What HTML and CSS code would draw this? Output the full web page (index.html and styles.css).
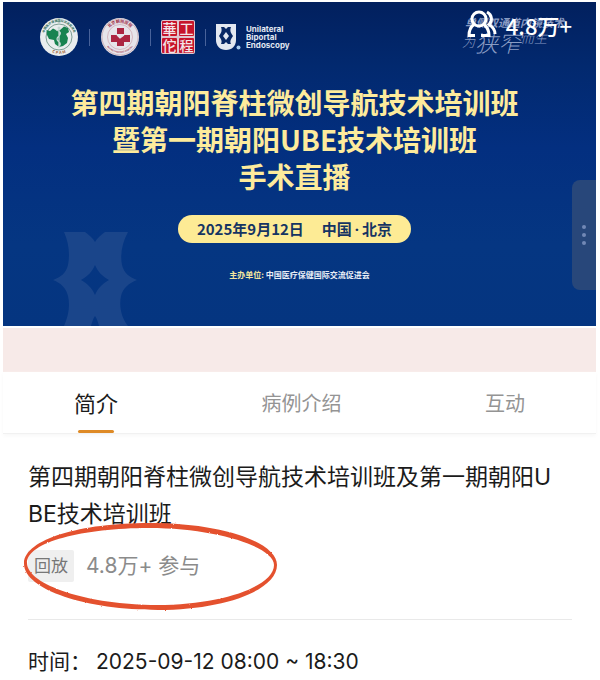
FILE: index.html
```html
<!DOCTYPE html>
<html lang="zh-CN">
<head>
  <meta charset="UTF-8">
  <meta name="viewport" content="width=device-width, initial-scale=1.0">
  <title>手术直播</title>
  <link rel="stylesheet" href="styles.css">
</head>
<body>

  <main class="page">
    <section class="banner">
      <!-- Background ornament -->
      <svg class="ornament" viewBox="0 0 84 94" aria-hidden="true">
        <path fill-rule="evenodd" d="M11 0H32C36 3 40 6 42 10C44 6 48 3 52 0H75C69 11 67 23 69 33C71 41 76 45 84 48C76 51 70 56 68 64C66 74 68 85 75 94H46C45 90 44 87 42 84C40 87 39 90 38 94H11C16 83 17 73 15 64C13 56 8 51 0 48C8 45 13 41 15 33C17 23 16 11 11 0ZM42 33C39 40 35 44 28 48C35 52 39 56 42 63C45 56 49 52 56 48C49 44 45 40 42 33Z"/>
      </svg>

      <div class="logos">
        <svg class="logo-round" viewBox="0 0 40 40" role="img" aria-label="中国医疗保健国际交流促进会">
          <circle cx="20" cy="20" r="19" fill="#e9edee"/>
          <circle cx="20" cy="20" r="13" fill="none" stroke="#4d7d6d" stroke-width="0.7"/>
          <path d="M7.500 13L11 14L14 11.500L17 13L21 13L25 9.500L29 11L30 15L27 17L29 21L28 26L24 29L20 30L16 27L15 23L10 22L8 18Z" fill="#178350"/>
          <path d="M20 10V31M17 13Q24 15 20 19Q16 22 20 25Q23 27 19 30" fill="none" stroke="#c5d8d4" stroke-width="1.300"/>
          <circle cx="20" cy="11" r="1.500" fill="#c5d8d4"/>
          <path id="arcTop" d="M5.500 25A15.300 15.300 0 1 1 34.500 25" fill="none"/>
          <path id="arcBottom" d="M8 32A17 17 0 0 0 32 32" fill="none"/>
          <text class="ring-text ring-green"><textPath href="#arcTop" startOffset="50%" text-anchor="middle">中国医疗保健国际交流促进会</textPath></text>
          <text class="ring-text ring-orange"><textPath href="#arcBottom" startOffset="50%" text-anchor="middle">C P A M</textPath></text>
        </svg>
        <span class="logo-line"></span>
        <svg class="logo-round" viewBox="0 0 40 40" role="img" aria-label="北京朝阳医院">
          <circle cx="20" cy="20" r="19" fill="#e6e4ea"/>
          <circle cx="20" cy="20" r="18" fill="none" stroke="#b4828f" stroke-width="0.500"/>
          <circle cx="20" cy="20" r="12.500" fill="none" stroke="#c799a4" stroke-width="0.600"/>
          <path d="M17 11H24V17H17ZM11 18H17L20 21L24 18H30V25H24V29H17V25H11Z" fill="#ac2542"/>
          <path d="M17 18L20 21L24 18" fill="none" stroke="#e6e4ea" stroke-width="1.200"/>
          <path id="arcHospital" d="M7 23A13.500 13.500 0 1 1 33 23" fill="none"/>
          <path id="arcEnglish" d="M4.500 25A16.500 16.500 0 0 0 35.500 25" fill="none"/>
          <text class="ring-text ring-red"><textPath href="#arcHospital" startOffset="50%" text-anchor="middle">北京朝阳医院</textPath></text>
          <text class="ring-text ring-english"><textPath href="#arcEnglish" startOffset="50%" text-anchor="middle">BEIJING CHAOYANG HOSPITAL</textPath></text>
        </svg>
        <span class="logo-line"></span>
        <svg class="logo-seal" viewBox="0 0 34 34" role="img" aria-label="华佗工程">
          <rect width="34" height="34" rx="2" fill="#dfc6ce"/>
          <rect x="1" y="1" width="15" height="15" rx="1" fill="#c7142b"/>
          <rect x="18" y="1" width="15" height="15" rx="1" fill="#c7142b"/>
          <rect x="1" y="18" width="15" height="15" rx="1" fill="#c7142b"/>
          <rect x="18" y="18" width="15" height="15" rx="1" fill="#c7142b"/>
          <g class="seal-text">
            <text x="8.500" y="14">華</text>
            <text x="25.500" y="14">工</text>
            <text x="8.500" y="31">佗</text>
            <text x="25.500" y="31">程</text>
          </g>
        </svg>
        <span class="logo-line"></span>
        <div class="ube">
          <svg class="ube-shield" viewBox="0 0 25 27" aria-hidden="true">
            <path d="M0 0H20V16C20 22 16 26 10 26C4 26 0 22 0 16Z" fill="#e3e8f1"/>
            <path fill-rule="evenodd" d="M5 3H8L10 5L12 3H15C14 6 14 8 17 12C14 16 14 18 15 20H12L10 18L8 20H5C6 18 6 16 3 12C6 8 6 6 5 3ZM10 8L7 12L10 16L13 12Z" fill="#082865"/>
            <circle cx="22.500" cy="23.500" r="2" fill="#a9cdf0"/>
          </svg>
          <p class="ube-name">Unilateral<br>Biportal<br>Endoscopy</p>
        </div>
      </div>

      <h1 class="banner-title">第四期朝阳脊柱微创导航技术培训班<br>暨第一期朝阳UBE技术培训班<br>手术直播</h1>
      <p class="date-pill"><span>2025年9月12日</span><span>中国<span class="dot">·</span>北京</span></p>
      <p class="organizer"><span class="organizer-label">主办单位:</span> 中国医疗保健国际交流促进会</p>

      <div class="slogan">
        <p class="slogan-small">单侧双通道内镜技术</p>
        <p class="slogan-large"><span>为</span><b>狭窄</b><span class="slogan-end">而生</span></p>
      </div>

      <div class="viewers">
        <svg class="viewers-icon" viewBox="0 0 30 28" aria-hidden="true">
          <circle cx="12" cy="9" r="7"/>
          <path d="M7 14.500C3.500 17 2 20 2 25.500H8M17 14.500C20 17 22 20 22 25.500H14"/>
          <path d="M20 2C25.500 5 25.500 11 22 14.500C26 17 28 20 28 24"/>
        </svg>
        <span>4.8万+</span>
      </div>

      <button class="drawer" type="button" aria-label="更多">
        <i></i><i></i><i></i>
      </button>
    </section>

    <div class="strip"></div>

    <nav class="tabs">
      <button class="tab active" type="button">简介</button>
      <button class="tab" type="button">病例介绍</button>
      <button class="tab" type="button">互动</button>
    </nav>

    <section class="intro">
      <h2 class="intro-title">第四期朝阳脊柱微创导航技术培训班及第一期朝阳UBE技术培训班</h2>
      <div class="stats">
        <span class="badge">回放</span>
        <span>4.8万+ 参与</span>
        <!-- Hand-drawn circle round the view count -->
        <svg class="marker" viewBox="0 0 260 92" aria-hidden="true">
          <filter id="rough" x="-5%" y="-5%" width="110%" height="110%">
            <feTurbulence type="fractalNoise" baseFrequency="0.500" numOctaves="2" seed="4"/>
            <feDisplacementMap in="SourceGraphic" scale="2" xChannelSelector="R" yChannelSelector="G"/>
          </filter>
          <g filter="url(#rough)">
            <path fill-rule="evenodd" d="M3 43C4 19 60 3 128 3C204 3 256 23 256 45C256 70 204 90 137 90C66 90 2 70 3 43ZM6 43C6 65 68 85 136 85C202 85 253 66 253 45C253 27 196 8 128 8C62 8 6 22 6 43Z"/>
          </g>
        </svg>
      </div>
      <dl class="time">
        <dt>时间：</dt>
        <dd>2025-09-12 08:00 ~ 18:30</dd>
      </dl>
    </section>
  </main>

</body>
</html>
```

FILE: styles.css
```css
* {
  box-sizing: border-box;
}
body {
  margin: 0;
  background: #fff;
  color: #1b1b1b;
  font-family: Inter, "Noto Sans CJK SC", sans-serif;
}
h1, h2, p, dl, dd {
  margin: 0;
}
button {
  padding: 0;
  border: none;
  background: none;
  font-family: inherit;
  cursor: pointer;
}
.page {
  padding: 2px 4px 0 3px;
}

/* Banner */
.banner {
  position: relative;
  display: flex;
  flex-direction: column;
  align-items: center;
  padding: 15px 10px 45px 0;
  overflow: hidden;
  background: linear-gradient(to bottom, #02205e 0%, #02296f 20%, #032f80 45%, #053682 75%, #053580 100%);
  font-family: "Noto Sans CJK SC", sans-serif;
}
.ornament {
  position: absolute;
  left: 50px;
  bottom: 0;
  width: 84px;
  height: 94px;
  fill: #1a458a;
}
.logos {
  display: flex;
  align-items: center;
  align-self: flex-start;
  gap: 10px;
  height: 40px;
  padding-left: 36px;
}
.logo-round {
  width: 40px;
  height: 40px;
}
.logo-line {
  width: 1px;
  height: 17px;
  background: #48629a;
}
.logo-seal {
  width: 34px;
  height: 34px;
  overflow: visible;
}
.ring-text {
  font-size: 3px;
  font-weight: 700;
}
.ring-green {
  fill: #2d6a58;
}
.ring-orange {
  font-size: 4px;
  fill: #a8683c;
}
.ring-red {
  font-size: 4px;
  fill: #9c2842;
}
.ring-english {
  font-size: 2px;
  fill: #9c2842;
}
.seal-text {
  font-size: 14px;
  font-weight: 500;
  text-anchor: middle;
  fill: #f3e5e8;
}
.ube {
  display: flex;
  align-items: center;
  gap: 5px;
}
.ube-shield {
  width: 25px;
  height: 27px;
}
.ube-name {
  color: #e3e8f1;
  font-family: Inter, sans-serif;
  font-size: 8px;
  font-weight: 700;
  line-height: 8px;
}
.banner-title {
  margin-top: 27px;
  color: #fdeb9c;
  font-size: 28px;
  font-weight: 700;
  line-height: 37px;
  text-align: center;
}
.date-pill {
  display: flex;
  gap: 18px;
  margin-top: 20px;
  padding: 0 19px;
  border-radius: 14px;
  background: #fdeb95;
  color: #153463;
  font-size: 15px;
  font-weight: 700;
  line-height: 28px;
}
.dot {
  margin: 0 3px;
  font-family: "Noto Sans", sans-serif;
  line-height: 1;
}
.organizer {
  margin-top: 26px;
  padding-left: 10px;
  color: #e9eef6;
  font-size: 8px;
  font-weight: 700;
  line-height: 12px;
}
.organizer-label {
  color: #f4e79e;
}
.slogan {
  position: absolute;
  top: 12px;
  right: 32px;
  color: #8a9cc3;
  font-style: italic;
}
.slogan-small {
  font-size: 11px;
  font-weight: 700;
  line-height: 16px;
}
.slogan-large {
  display: flex;
  align-items: center;
  margin-left: -3px;
  font-size: 13px;
  font-weight: 300;
  line-height: 24px;
}
.slogan-large b {
  font-size: 23px;
  font-weight: 300;
}
.slogan-end {
  align-self: flex-start;
  line-height: 16px;
}
.viewers {
  position: absolute;
  top: 8px;
  right: 24px;
  display: flex;
  gap: 9px;
  color: #fff;
  font-size: 22px;
  font-weight: 500;
  line-height: 30px;
}
.viewers-icon {
  width: 30px;
  height: 28px;
  fill: none;
  stroke: #fff;
  stroke-width: 3;
}
.drawer {
  position: absolute;
  top: 178px;
  right: 0;
  display: flex;
  flex-direction: column;
  align-items: center;
  justify-content: center;
  gap: 4px;
  width: 24px;
  height: 110px;
  border-radius: 8px 0 0 8px;
  background: #28477a;
}
.drawer i {
  width: 4px;
  height: 4px;
  border-radius: 50%;
  background: #7288b5;
}
.strip {
  height: 44px;
  margin-top: 2px;
  background: #f7eae8;
}

/* Tabs */
.tabs {
  display: flex;
  justify-content: space-between;
  padding: 0 71px;
  border-bottom: 1px solid #f1f1f1;
  box-shadow: 0 2px 4px #f8f8f8;
}
.tab {
  position: relative;
  height: 61px;
  padding-top: 4px;
  color: #949494;
  font-size: 20px;
  line-height: 57px;
}
.tab.active {
  color: #1b1b1b;
  font-size: 22px;
}
.tab.active::after {
  content: "";
  position: absolute;
  bottom: 0;
  left: 4px;
  right: 4px;
  height: 3px;
  border-radius: 2px;
  background: #de8a26;
}

/* Intro */
.intro {
  padding: 25px 24px 0 25px;
}
.intro-title {
  padding-right: 12px;
  font-size: 23px;
  font-weight: 400;
  line-height: 37px;
  word-break: break-all;
}
.stats {
  position: relative;
  display: flex;
  align-items: center;
  gap: 12px;
  padding: 17px 0 37px;
  border-bottom: 1px solid #e9e9e9;
  color: #8b8b8b;
  font-size: 21px;
  line-height: 32px;
}
.badge {
  padding: 0 6px;
  border-radius: 2px;
  background: #efefef;
  color: #777;
  font-size: 17px;
}
.marker {
  position: absolute;
  top: -13px;
  left: -7px;
  width: 260px;
  height: 92px;
  overflow: visible;
  fill: #e4512f;
}
.time {
  display: flex;
  gap: 5px;
  padding-top: 26px;
  font-size: 21px;
  line-height: 32px;
}
```
